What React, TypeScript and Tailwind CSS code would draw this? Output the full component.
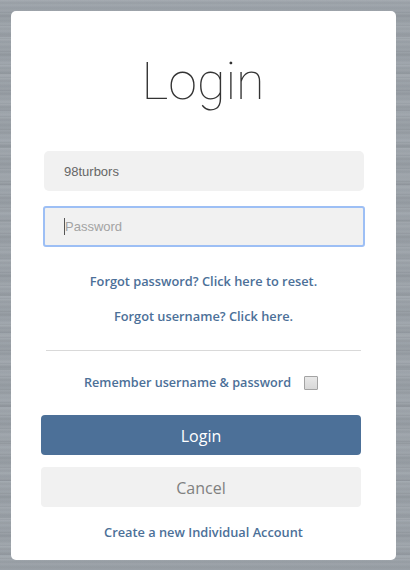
export default function App() {
  return (
    <div className="w-[410px] h-[570px] overflow-hidden pt-[11px] pl-[11px] bg-[#9ca3aa] bg-[repeating-linear-gradient(180deg,#ffffff0e_0px,#0000000b_3px,#ffffff08_5px,#00000006_8px,#ffffff0b_11px,#0000000c_13px),repeating-linear-gradient(180deg,#ffffff0c_0px,#0000000c_17px,#ffffff0a_29px,#00000010_37px)]">
      <div className="w-[385px] h-[549px] bg-white rounded-[5px] flex flex-col font-['Open_Sans',sans-serif]">
        <h1 className="mt-[40px] h-[60px] leading-[62px] text-center text-[52px] font-thin text-[#333] font-['Roboto',sans-serif] pr-[1px]">Login</h1>
        <div className="mt-[40px] ml-[33px] w-[320px] h-[40px] bg-[#f1f1f1] rounded-[5px] pl-[20px] pt-px flex items-center text-[13px] text-[#666] font-['Liberation_Sans',sans-serif]">98turbors</div>
        <div className="mt-[15px] ml-[32px] w-[322px] h-[41px] bg-[#f1f1f1] rounded-[3px] border-2 border-[#9dbff5] pl-[19px] flex items-center text-[13px] text-[#a3a3a3] font-['Liberation_Sans',sans-serif]">
          <span className="w-px h-[17px] bg-[#555]" />
          <span>Password</span>
        </div>
        <a className="mt-[24px] h-[20px] leading-[20px] text-center text-[12.8px] font-semibold text-[#4c7098]">Forgot password? Click here to reset.</a>
        <a className="mt-[15px] h-[20px] leading-[20px] text-center text-[12.8px] font-semibold text-[#4c7098]">Forgot username? Click here.</a>
        <div className="mt-[24px] ml-[35px] w-[315px] h-px bg-[#d9d9d9]" />
        <div className="mt-[24px] ml-[73px] h-[16px] flex items-center text-[12.65px] font-semibold text-[#4c7098]">
          <span className="pb-[2px]">Remember username &amp; password</span>
          <span className="ml-[13px] w-[14px] h-[14px] border border-[#a3a3a3] rounded-[1px] bg-[#dcdcdc] bg-gradient-to-b from-[#e8e8e8] to-[#d8d8d8]" />
        </div>
        <button className="mt-[24px] ml-[30px] w-[320px] h-[40px] pt-[2px] bg-[#4c7098] rounded-[4px] text-white text-[16px] font-['Open_Sans',sans-serif]">Login</button>
        <button className="mt-[12px] ml-[30px] w-[320px] h-[40px] pt-[2px] bg-[#f1f1f1] rounded-[4px] text-[#808080] text-[16px] font-['Open_Sans',sans-serif]">Cancel</button>
        <a className="mt-[15px] h-[20px] leading-[20px] text-center text-[12.8px] font-semibold text-[#4c7098]">Create a new Individual Account</a>
      </div>
    </div>
  );
}
